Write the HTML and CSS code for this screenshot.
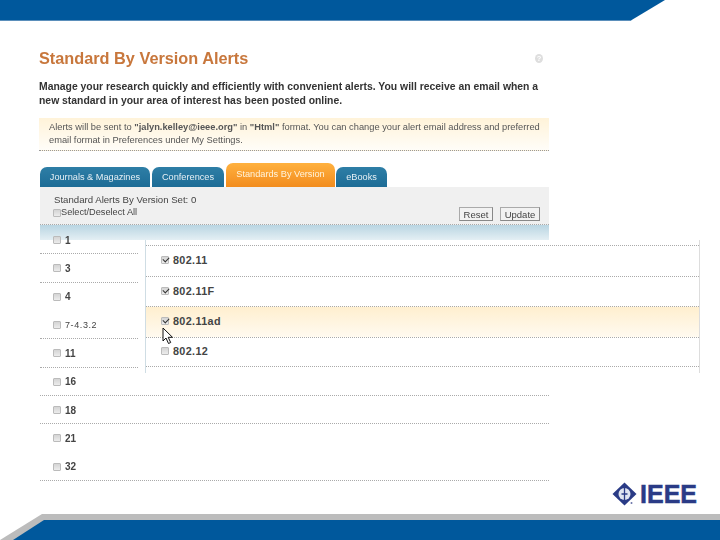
FILE: index.html
```html
<!DOCTYPE html>
<html lang="en">
<head>
<meta charset="utf-8">
<title>Standard By Version Alerts</title>
<link rel="stylesheet" href="styles.css">
</head>
<body>
<div class="slide">
  <div class="topbar"></div>
  <main class="content">
    <div class="title-row">
      <h1 class="title">Standard By Version Alerts</h1>
      <span class="help">?</span>
    </div>
    <p class="intro">Manage your research quickly and efficiently with convenient alerts. You will receive an email when a new standard in your area of interest has been posted online.</p>
    <div class="notice">Alerts will be sent to <b>"jalyn.kelley@ieee.org"</b> in <b>"Html"</b> format. You can change your alert email address and preferred email format in Preferences under My Settings.</div>
    <nav class="tabs">
      <span class="tab tab-j">Journals &amp; Magazines</span>
      <span class="tab tab-c">Conferences</span>
      <span class="tab tab-s">Standards By Version</span>
      <span class="tab tab-e">eBooks</span>
    </nav>
    <div class="panel">
      <div class="panel-text">
        <div class="panel-count">Standard Alerts By Version Set: 0</div>
        <label class="select-all"><span class="check"></span>Select/Deselect All</label>
      </div>
      <div class="buttons">
        <button class="btn">Reset</button>
        <button class="btn btn-update">Update</button>
      </div>
    </div>
    <div class="list">
      <div class="row short"><span class="check"></span>1</div>
      <div class="row short"><span class="check"></span>3</div>
      <div class="row short none"><span class="check"></span>4</div>
      <div class="row short small"><span class="check"></span>7-4.3.2</div>
      <div class="row short"><span class="check"></span>11</div>
      <div class="row"><span class="check"></span>16</div>
      <div class="row"><span class="check"></span>18</div>
      <div class="row none"><span class="check"></span>21</div>
      <div class="row"><span class="check"></span>32</div>
      <div class="flyout">
        <div class="fly-row"><span class="check on"></span>802.11</div>
        <div class="fly-row"><span class="check on"></span>802.11F</div>
        <div class="fly-row active"><span class="check on"></span>802.11ad</div>
        <div class="fly-row"><span class="check"></span>802.12</div>
      </div>
      <svg class="cursor" width="12" height="18" viewBox="0 0 12 18"><path d="M1 1v13l3-3 2.500 5.500 2.200-1-2.500-5.200H10.500z" fill="#fff" stroke="#111" stroke-width="1"/></svg>
    </div>
  </main>
  <div class="logo">
    <svg class="diamond" width="25" height="24" viewBox="0 0 25 24"><path d="M12.500 .5 24.500 12l-12 11.500L.5 12z" fill="#2a3b86"/><circle cx="12.500" cy="12" r="6" fill="#dfe4f0"/><path d="M12.500 5.500v13M9.500 12h6" stroke="#2a3b86" stroke-width="1.300"/><circle cx="19.500" cy="21" r="1" fill="#6a74a8"/></svg>
    <span class="logo-text">IEEE</span>
  </div>
  <div class="footer"><div class="footer-blue"></div></div>
</div>
</body>
</html>
```
FILE: styles.css
```css
* { box-sizing: border-box; }
html, body { margin: 0; padding: 0; }
body { font-family: "Liberation Sans", Arial, sans-serif; background: #fff; }
.slide { width: 720px; height: 540px; display: flex; flex-direction: column; overflow: hidden; position: relative; }
.topbar { height: 21px; flex: none; background: #00589c; border-bottom: 1px solid #5b8fbb; clip-path: polygon(0 0, 665px 0, 630px 100%, 0 100%); }
.content { width: 510px; margin-left: 39px; flex: none; filter: blur(.3px); }
.title-row { display: flex; justify-content: space-between; align-items: center; margin-top: 27px; height: 20px; }
.title { margin: 0; font-size: 16.300px; font-weight: 700; color: #c8773c; white-space: nowrap; }
.help { width: 8px; height: 9px; margin-right: 6px; margin-top: 1px; border-radius: 50%; background: #dedede; color: #fff; font-size: 7.500px; font-weight: 700; line-height: 9px; text-align: center; }
.intro { margin: 12px 0 0; width: 505px; font-size: 10.400px; line-height: 13.500px; font-weight: 700; color: #333; }
.notice { margin-top: 11px; height: 33px; padding: 3px 8px 0 10px; font-size: 9.300px; line-height: 13px; color: #555; background: linear-gradient(#fff3d9, #fffdf8); border-bottom: 1px dotted #999; }
.tabs { display: flex; align-items: flex-end; height: 36px; margin-left: 1px; }
.tab { height: 20px; display: flex; align-items: center; justify-content: center; border-radius: 7px 7px 0 0; background: linear-gradient(#2e7ea6, #1d6c96); color: #e6f0f5; font-size: 9.200px; margin-right: 2px; white-space: nowrap; }
.tab-j { width: 110px; }
.tab-c { width: 72px; }
.tab-s { width: 109px; height: 24px; margin-right: 1px; align-items: flex-start; padding-top: 6px; background: linear-gradient(#ffb13f, #f28c1e); color: #fff3dc; }
.tab-e { width: 51px; margin-right: 0; }
.panel { height: 38px; display: flex; justify-content: space-between; align-items: flex-end; padding: 0 9px 3px 14px; background: #f0f0f0; border-bottom: 1px dotted #aaa; margin-left: 1px; }
.panel-text { font-size: 9.650px; line-height: 13px; color: #444; padding-bottom: 2px; }
.select-all { display: flex; align-items: center; margin-left: -1px; font-size: 9.200px; }
.select-all .check { margin-right: 0; }
.buttons { display: flex; gap: 7px; }
.btn { height: 14px; padding: 0; width: 34px; font: 9.500px "Liberation Sans", Arial, sans-serif; color: #444; background: #f2f2f2; border: 1px solid #aaa; border-right-color: #888; border-bottom-color: #888; }
.btn-update { width: 40px; }
.list { position: relative; margin-left: 1px; padding-top: 1px; background: linear-gradient(#b9d5e2, #e4eff4) no-repeat 0 0 / 100% 15px; }
.row { height: 28.330px; display: flex; align-items: center; padding: 1px 0 0 13px; border-bottom: 1px dotted #aaa; font-size: 10px; font-weight: 700; color: #444; }
.row.short { width: 98px; }
.row.none { border-bottom-color: transparent; }
.row.small { font-size: 9px; font-weight: 400; letter-spacing: .6px; }
.check { position: relative; flex: none; display: inline-block; width: 8px; height: 8px; margin-right: 4px; border: 1px solid #bbb; border-radius: 1px; background: linear-gradient(#d4d4d4, #ececec); }
.check.on::after { content: ""; position: absolute; left: 1px; top: 0; width: 5px; height: 3px; border-left: 1.700px solid #333; border-bottom: 1.700px solid #333; transform: rotate(-45deg); }
.flyout { position: absolute; left: 105px; top: 15px; width: 555px; height: 133px; padding-top: 5px; background: #fff; border-left: 1px solid #cfdde4; border-right: 1px solid #ddd; }
.fly-row { height: 30.500px; display: flex; align-items: center; padding: 0 0 1px 15px; border-top: 1px dotted #aaa; font-size: 10.800px; font-weight: 700; color: #444; letter-spacing: .35px; }
.fly-row:last-child { border-bottom: 1px dotted #aaa; }
.fly-row .check { margin-right: 4px; }
.fly-row.active { background: linear-gradient(#ffefcf, #fffaf0); }
.cursor { position: absolute; left: 122px; top: 102px; }
.logo { position: absolute; right: 23px; bottom: 34px; display: flex; align-items: center; gap: 3px; }
.logo-text { font-size: 25px; line-height: 24px; font-weight: 700; color: #2a3b86; -webkit-text-stroke: .5px #2a3b86; }
.footer { position: absolute; left: 0; right: 0; bottom: 0; height: 26px; background: #bcbcbc; clip-path: polygon(42px 0, 100% 0, 100% 100%, 0 100%); padding: 6px 0 0 13px; }
.footer-blue { height: 20px; background: #00589c; clip-path: polygon(31px 0, 100% 0, 100% 100%, 0 100%); }
```
